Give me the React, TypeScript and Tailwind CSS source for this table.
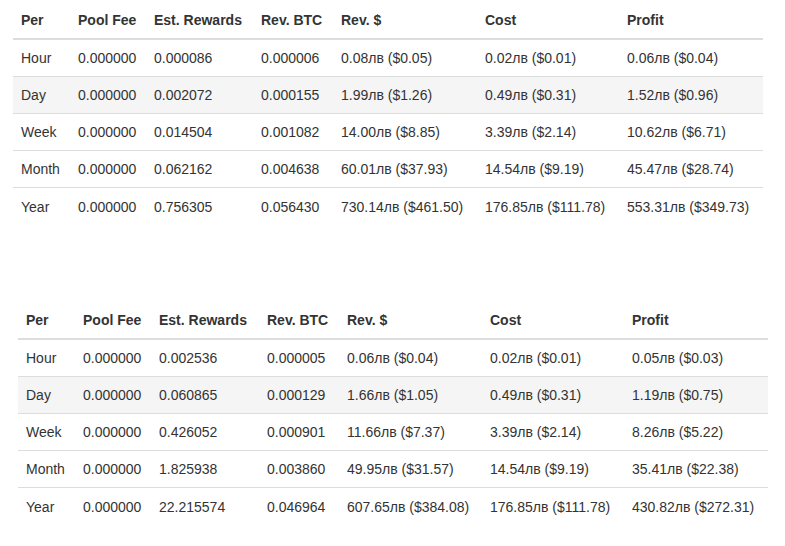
import React from 'react';

// --- Data profitabilitas ---
type Row = { per: string; fee: string; est: string; btc: string; rev: string; cost: string; profit: string };

const headers = ['Per', 'Pool Fee', 'Est. Rewards', 'Rev. BTC', 'Rev. $', 'Cost', 'Profit'];

const firstTable: Row[] = [
  { per: 'Hour', fee: '0.000000', est: '0.000086', btc: '0.000006', rev: '0.08лв ($0.05)', cost: '0.02лв ($0.01)', profit: '0.06лв ($0.04)' },
  { per: 'Day', fee: '0.000000', est: '0.002072', btc: '0.000155', rev: '1.99лв ($1.26)', cost: '0.49лв ($0.31)', profit: '1.52лв ($0.96)' },
  { per: 'Week', fee: '0.000000', est: '0.014504', btc: '0.001082', rev: '14.00лв ($8.85)', cost: '3.39лв ($2.14)', profit: '10.62лв ($6.71)' },
  { per: 'Month', fee: '0.000000', est: '0.062162', btc: '0.004638', rev: '60.01лв ($37.93)', cost: '14.54лв ($9.19)', profit: '45.47лв ($28.74)' },
  { per: 'Year', fee: '0.000000', est: '0.756305', btc: '0.056430', rev: '730.14лв ($461.50)', cost: '176.85лв ($111.78)', profit: '553.31лв ($349.73)' },
];

const secondTable: Row[] = [
  { per: 'Hour', fee: '0.000000', est: '0.002536', btc: '0.000005', rev: '0.06лв ($0.04)', cost: '0.02лв ($0.01)', profit: '0.05лв ($0.03)' },
  { per: 'Day', fee: '0.000000', est: '0.060865', btc: '0.000129', rev: '1.66лв ($1.05)', cost: '0.49лв ($0.31)', profit: '1.19лв ($0.75)' },
  { per: 'Week', fee: '0.000000', est: '0.426052', btc: '0.000901', rev: '11.66лв ($7.37)', cost: '3.39лв ($2.14)', profit: '8.26лв ($5.22)' },
  { per: 'Month', fee: '0.000000', est: '1.825938', btc: '0.003860', rev: '49.95лв ($31.57)', cost: '14.54лв ($9.19)', profit: '35.41лв ($22.38)' },
  { per: 'Year', fee: '0.000000', est: '22.215574', btc: '0.046964', rev: '607.65лв ($384.08)', cost: '176.85лв ($111.78)', profit: '430.82лв ($272.31)' },
];

const ProfitTable = ({ rows, cols, className }: { rows: Row[]; cols: string; className: string }) => (
  <div className={`w-[750px] ${className}`}>
    <div className={`grid ${cols} h-[38px] items-center border-b-2 border-[#dddddd] font-bold`}>
      {headers.map((h) => (
        <div key={h} className="px-2">{h}</div>
      ))}
    </div>
    {rows.map((r, i) => (
      <div
        key={r.per}
        className={`grid ${cols} h-[37px] items-center ${i < rows.length - 1 ? 'border-b border-[#dddddd]' : ''} ${r.per === 'Day' ? 'bg-[#f5f5f5]' : ''}`}
      >
        {[r.per, r.fee, r.est, r.btc, r.rev, r.cost, r.profit].map((v, j) => (
          <div key={j} className="px-2 whitespace-nowrap">{v}</div>
        ))}
      </div>
    ))}
  </div>
);

export default function App() {
  return (
    <div className="min-h-[546px] w-[785px] bg-white text-[14px] leading-5 text-[#333333] font-['Liberation_Sans',Arial,sans-serif]">
      <ProfitTable
        rows={firstTable}
        cols="grid-cols-[57px_76px_107px_80px_144px_142px_144px]"
        className="ml-[13px] pt-[2px]"
      />
      <ProfitTable
        rows={secondTable}
        cols="grid-cols-[57px_76px_108px_80px_143px_142px_144px]"
        className="ml-[18px] mt-[77px]"
      />
    </div>
  );
}
